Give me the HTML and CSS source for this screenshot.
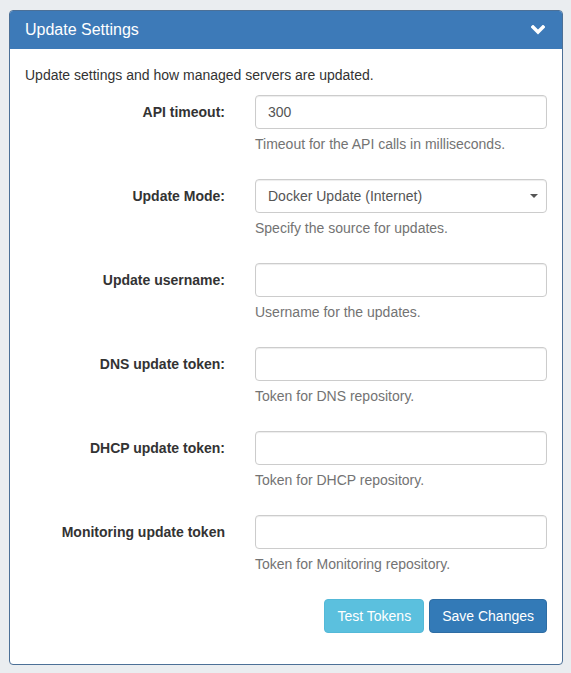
FILE: index.html
```html
<!DOCTYPE html>
<html lang="en">
<head>
<meta charset="utf-8">
<title>Update Settings</title>
<link rel="stylesheet" href="styles.css">
</head>
<body>
<div class="panel">
  <div class="panel-heading">
    <h3 class="panel-title">Update Settings</h3>
    <svg class="chevron" width="14" height="10" viewBox="0 0 14 10"><polyline points="2,2 7,7 12,2" fill="none" stroke="#fff" stroke-width="3.4" stroke-linecap="square"/></svg>
  </div>
  <div class="panel-body">
    <p class="desc">Update settings and how managed servers are updated.</p>
    <div class="form-group">
      <label class="control-label">API timeout:</label>
      <div class="field">
        <input class="form-control" type="text" value="300">
        <p class="help-block">Timeout for the API calls in milliseconds.</p>
      </div>
    </div>
    <div class="form-group">
      <label class="control-label">Update Mode:</label>
      <div class="field">
        <div class="select-wrap">
          <select class="form-control select"><option>Docker Update (Internet)</option></select>
          <span class="caret"></span>
        </div>
        <p class="help-block">Specify the source for updates.</p>
      </div>
    </div>
    <div class="form-group">
      <label class="control-label">Update username:</label>
      <div class="field">
        <input class="form-control" type="text" value="">
        <p class="help-block">Username for the updates.</p>
      </div>
    </div>
    <div class="form-group">
      <label class="control-label">DNS update token:</label>
      <div class="field">
        <input class="form-control" type="text" value="">
        <p class="help-block">Token for DNS repository.</p>
      </div>
    </div>
    <div class="form-group">
      <label class="control-label">DHCP update token:</label>
      <div class="field">
        <input class="form-control" type="text" value="">
        <p class="help-block">Token for DHCP repository.</p>
      </div>
    </div>
    <div class="form-group">
      <label class="control-label">Monitoring update token</label>
      <div class="field">
        <input class="form-control" type="text" value="">
        <p class="help-block">Token for Monitoring repository.</p>
      </div>
    </div>
    <div class="form-group actions">
      <div></div>
      <div class="buttons">
        <button class="btn btn-info" type="button">Test Tokens</button>
        <button class="btn btn-primary" type="button">Save Changes</button>
      </div>
    </div>
  </div>
</div>
</body>
</html>
```

FILE: styles.css
```css
* { box-sizing: border-box; }
html, body {
  margin: 0;
  padding: 0;
  background: #eaedf0;
  font-family: "Liberation Sans", Arial, sans-serif;
  font-size: 14px;
  line-height: 20px;
  color: #333;
}
.panel {
  margin: 10px 8px 10px 9px;
  background: #fff;
  border: 1px solid #4c7097;
  border-radius: 4px;
  overflow: hidden;
}
.panel-heading {
  background: #3d7ab8;
  color: #fff;
  padding: 10px 15px;
  height: 38px;
  display: flex;
  align-items: center;
  justify-content: space-between;
}
.panel-title {
  margin: 0;
  font-size: 16px;
  font-weight: normal;
  line-height: 18px;
}
.chevron { display: block; margin-right: 2px; }
.panel-body { padding: 16px 15px 16px; }
.desc { margin: 0 0 10px; }
.form-group {
  display: grid;
  grid-template-columns: 200px 1fr;
  column-gap: 30px;
  margin-bottom: 15px;
}
.control-label {
  text-align: right;
  font-weight: bold;
  padding-top: 7px;
}
.form-control {
  display: block;
  width: 100%;
  height: 34px;
  padding: 6px 12px;
  font-family: inherit;
  font-size: 14px;
  line-height: 20px;
  color: #555;
  background: #fff;
  border: 1px solid #ccc;
  border-radius: 4px;
  box-shadow: inset 0 1px 1px rgba(0,0,0,.075);
  outline: none;
}
.select-wrap { position: relative; }
.select { -webkit-appearance: none; appearance: none; }
.caret {
  position: absolute;
  right: 9px;
  top: 15px;
  width: 0;
  height: 0;
  border-left: 4px solid transparent;
  border-right: 4px solid transparent;
  border-top: 4px solid #555;
}
.help-block {
  margin: 5px 0 10px;
  color: #737373;
}
.buttons {
  display: flex;
  justify-content: flex-end;
  gap: 5px;
}
.btn {
  height: 34px;
  padding: 6px 12px;
  font-family: inherit;
  font-size: 14px;
  line-height: 20px;
  color: #fff;
  border: 1px solid transparent;
  border-radius: 4px;
  cursor: pointer;
}
.btn-info { background: #5bc0de; border-color: #54b9d8; }
.btn-primary { background: #337ab7; border-color: #2e6da4; }
```
